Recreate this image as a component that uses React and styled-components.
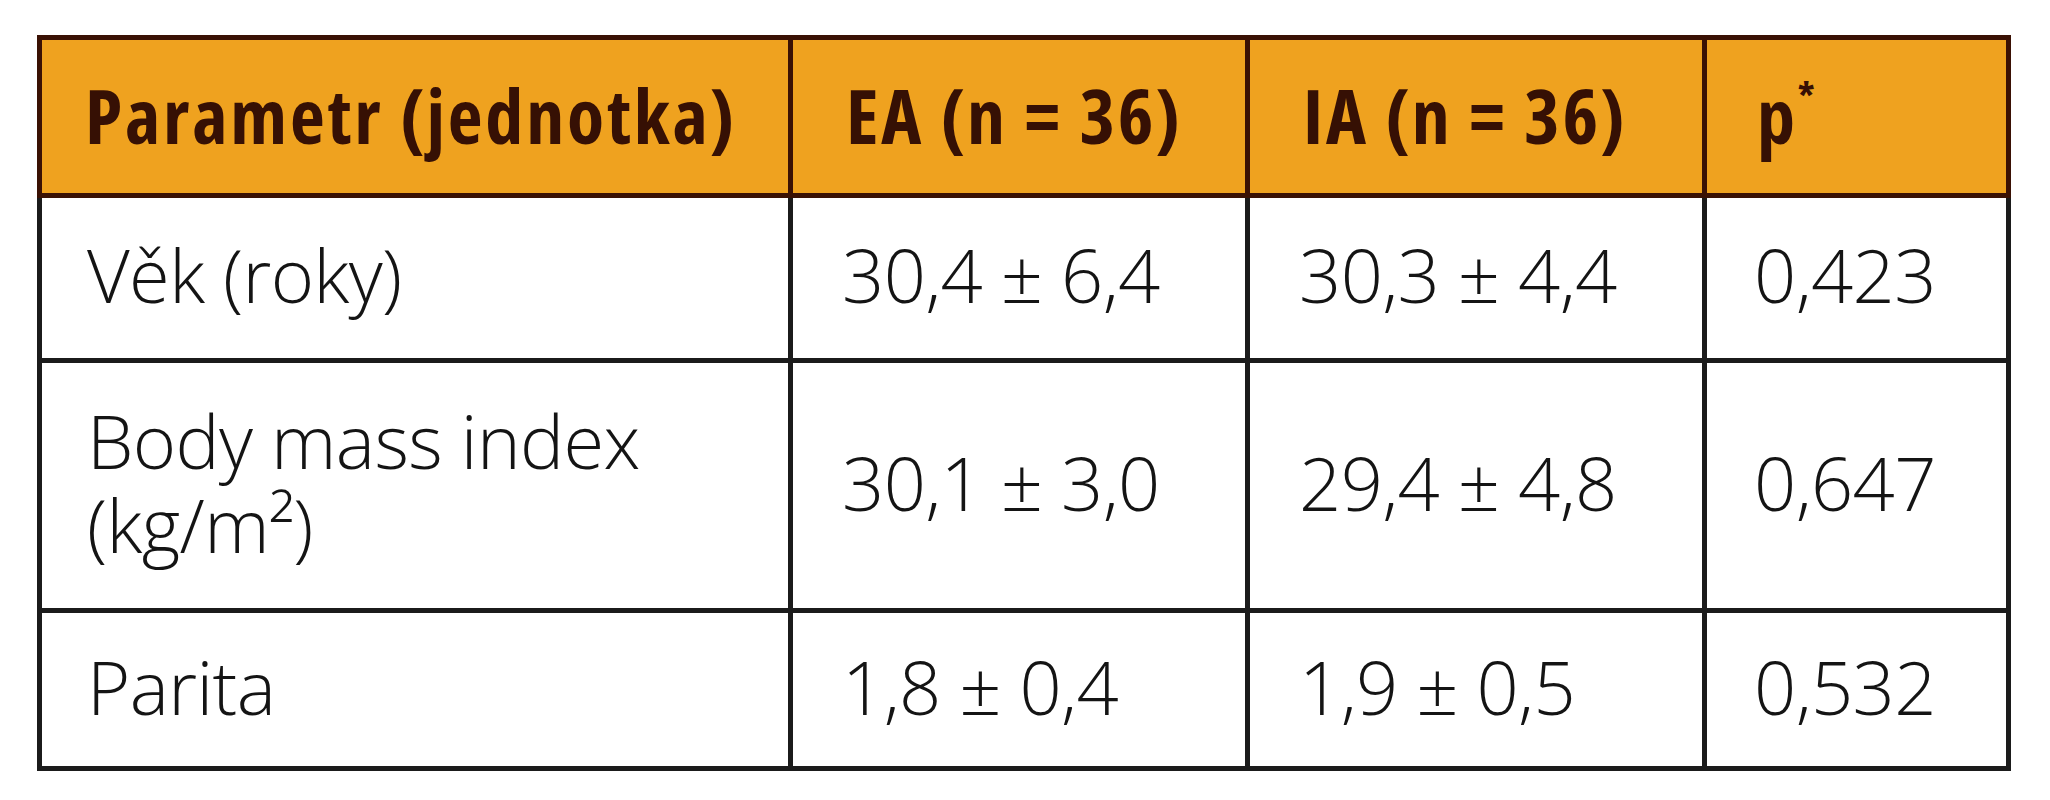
import React from "react";
import styled, { createGlobalStyle } from "styled-components";

const Global = createGlobalStyle`
  html, body { margin: 0; padding: 0; background: #ffffff; }
`;

const Page = styled.div`
  width: 2050px;
  height: 800px;
  box-sizing: border-box;
  padding: 35px 0 0 37px;
  background: #ffffff;
`;

const Table = styled.table`
  border-collapse: collapse;
  table-layout: fixed;
  width: 1969px;
  font-family: "Open Sans", "Liberation Sans", sans-serif;
`;

const HeadRow = styled.tr`
  height: 158px;
  background: #efa21f;
`;

const BodyRow = styled.tr`
  height: ${p => p.h}px;
  background: #ffffff;
`;

const Th = styled.th`
  border: 5px solid #3a1104;
  padding: 0 0 4px ${p => p.pl || 53}px;
  text-align: left;
  vertical-align: middle;
  font-size: 76px;
  font-weight: 700;
  font-stretch: 86%;
  letter-spacing: 2.8px;
  line-height: 1;
  color: #361004;
  white-space: nowrap;
`;

const Td = styled.td`
  border: 5px solid #1b1b1b;
  padding: 0 0 6px ${p => p.pl || 49}px;
  text-align: left;
  vertical-align: middle;
  font-size: 74px;
  font-weight: 300;
  font-stretch: 89%;
  letter-spacing: -0.6px;
  line-height: 84px;
  color: #141414;
  white-space: nowrap;
`;

const Sup = styled.sup`
  font-size: 0.5em;
  vertical-align: 0.9em;
  line-height: 0;
`;

const rows = [
  { h: 165, label: <>Věk (roky)</>, ea: "30,4 ± 6,4", ia: "30,3 ± 4,4", p: "0,423" },
  {
    h: 250,
    label: (
      <>
        Body mass index
        <br />
        (kg/m²)
      </>
    ),
    ea: "30,1 ± 3,0",
    ia: "29,4 ± 4,8",
    p: "0,647",
  },
  { h: 158, label: <>Parita</>, ea: "1,8 ± 0,4", ia: "1,9 ± 0,5", p: "0,532" },
];

export default function App() {
  return (
    <Page>
      <Global />
      <Table>
        <colgroup>
          <col style={{ width: 751 }} />
          <col style={{ width: 457 }} />
          <col style={{ width: 457 }} />
          <col style={{ width: 304 }} />
        </colgroup>
        <thead>
          <HeadRow>
            <Th pl={43}>Parametr (jednotka)</Th>
            <Th>EA (n = 36)</Th>
            <Th>IA (n = 36)</Th>
            <Th pl={50}>
              p<Sup>*</Sup>
            </Th>
          </HeadRow>
        </thead>
        <tbody>
          {rows.map((r, i) => (
            <BodyRow key={i} h={r.h}>
              <Td pl={45}>{r.label}</Td>
              <Td>{r.ea}</Td>
              <Td>{r.ia}</Td>
              <Td pl={47}>{r.p}</Td>
            </BodyRow>
          ))}
        </tbody>
      </Table>
    </Page>
  );
}
